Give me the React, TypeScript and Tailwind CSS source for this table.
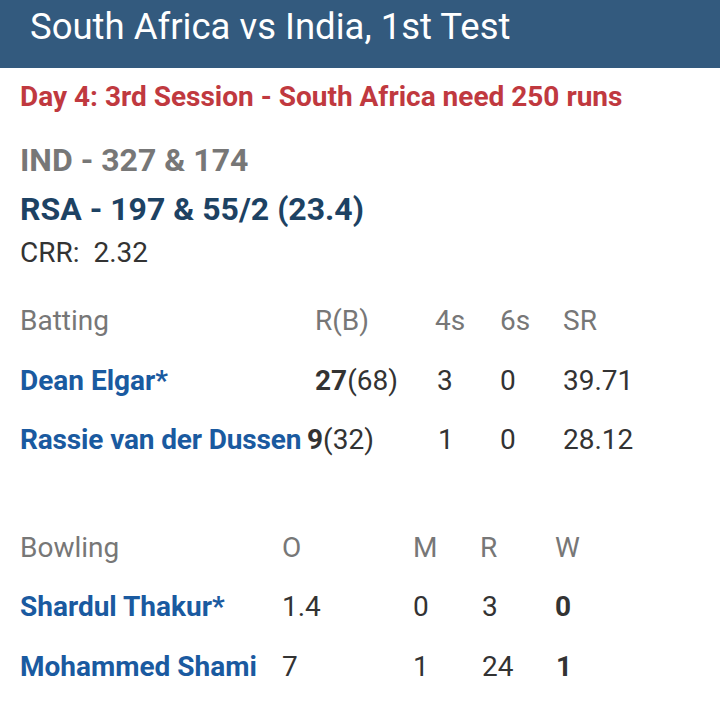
export default function App() {
  const font = { fontFamily: 'Roboto, "Liberation Sans", sans-serif' };
  return (
    <div className="w-[720px] h-[727px] bg-white overflow-hidden" style={font}>
      <div className="h-[68px] bg-[#335a7e] flex items-start pl-[30px] pt-[9px]">
        <h1 className="text-[36.5px] text-white leading-[36px] font-normal">South Africa vs India, 1st Test</h1>
      </div>
      <div className="pl-[20px]">
        <div className="mt-[14px] text-[28px] font-bold text-[#c0393f] leading-[30px]">Day 4: 3rd Session - South Africa need 250 runs</div>
        <div className="mt-[31px] text-[32px] font-bold text-[#777777] leading-[34px]">IND - 327 &amp; 174</div>
        <div className="mt-[15px] text-[32px] font-bold text-[#1d4263] leading-[34px]">RSA - 197 &amp; 55/2 (23.4)</div>
        <div className="mt-[11px] text-[28px] text-[#333333] leading-[32px]">CRR:&nbsp; 2.32</div>

        <div className="mt-[36px] text-[28px] leading-[32px]">
          <div className="flex text-[#777777]">
            <div className="w-[295px]">Batting</div>
            <div className="w-[120px]">R(B)</div>
            <div className="w-[65px]">4s</div>
            <div className="w-[63px]">6s</div>
            <div>SR</div>
          </div>
          <div className="flex mt-[28px] text-[#333333]">
            <div className="w-[295px] font-bold text-[#1a5aa0]">Dean Elgar*</div>
            <div className="w-[122px]"><span className="font-bold">27</span>(68)</div>
            <div className="w-[63px]">3</div>
            <div className="w-[63px]">0</div>
            <div>39.71</div>
          </div>
          <div className="flex mt-[27px] text-[#333333]">
            <div className="w-[287px] font-bold text-[#1a5aa0] whitespace-nowrap tracking-[-0.15px]">Rassie van der Dussen</div>
            <div className="w-[131px]"><span className="font-bold">9</span>(32)</div>
            <div className="w-[62px]">1</div>
            <div className="w-[63px]">0</div>
            <div>28.12</div>
          </div>
        </div>

        <div className="mt-[76px] text-[28px] leading-[32px]">
          <div className="flex text-[#777777]">
            <div className="w-[262px]">Bowling</div>
            <div className="w-[131px]">O</div>
            <div className="w-[67px]">M</div>
            <div className="w-[75px]">R</div>
            <div>W</div>
          </div>
          <div className="flex mt-[27px] text-[#333333]">
            <div className="w-[262px] font-bold text-[#1a5aa0]">Shardul Thakur*</div>
            <div className="w-[131px]">1.4</div>
            <div className="w-[69px]">0</div>
            <div className="w-[73px]">3</div>
            <div className="font-bold">0</div>
          </div>
          <div className="flex mt-[28px] text-[#333333]">
            <div className="w-[262px] font-bold text-[#1a5aa0]">Mohammed Shami</div>
            <div className="w-[131px]">7</div>
            <div className="w-[69px]">1</div>
            <div className="w-[74px]">24</div>
            <div className="font-bold">1</div>
          </div>
        </div>
      </div>
    </div>
  );
}
